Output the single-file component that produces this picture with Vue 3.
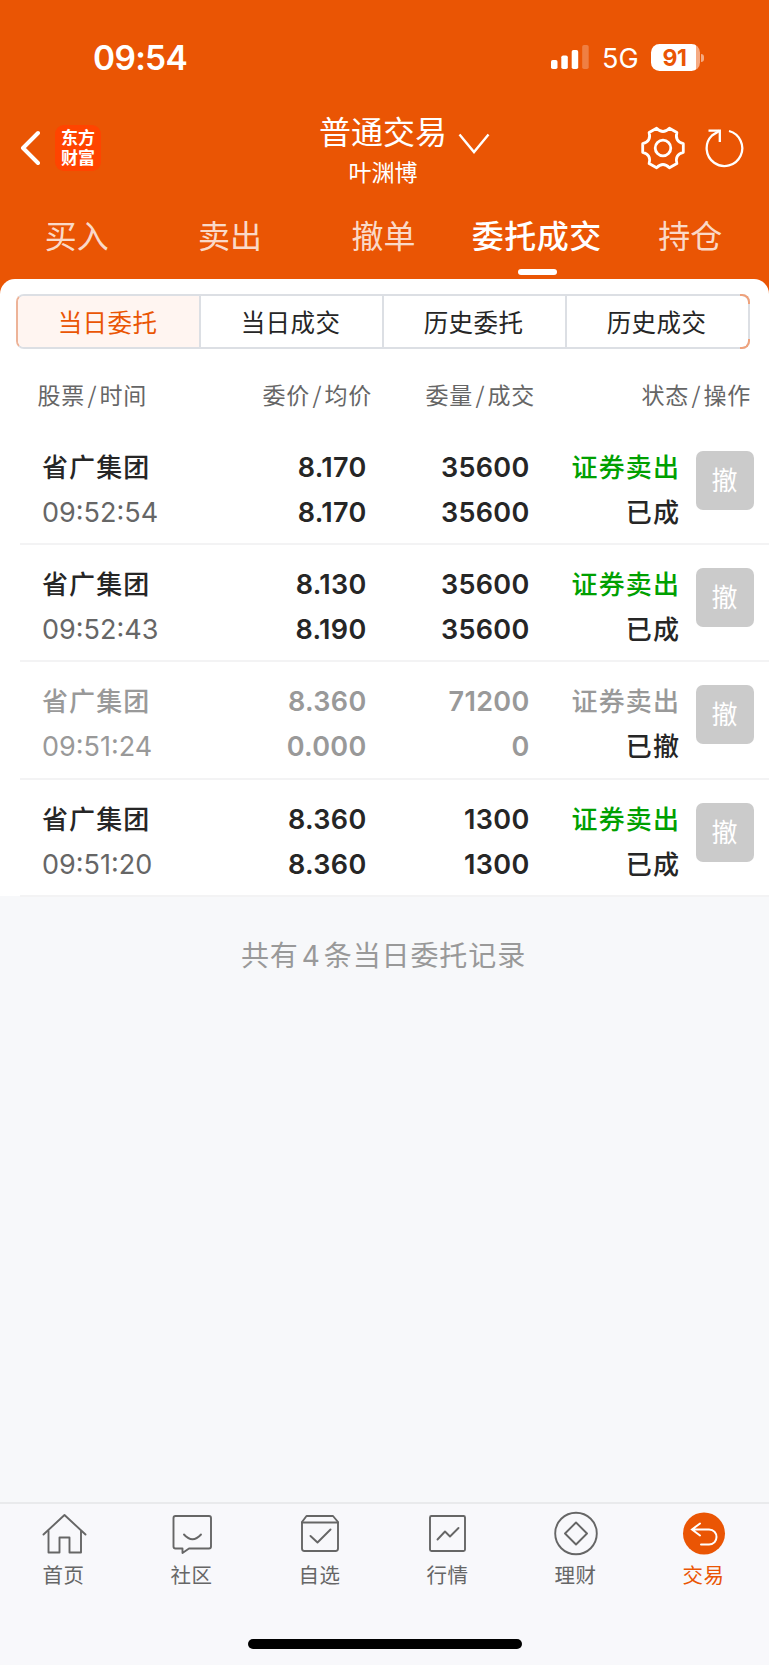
<script setup>
import { ref } from 'vue';

const tabs = ['买入', '卖出', '撤单', '委托成交', '持仓'];
const activeTab = ref(3);

const segments = ['当日委托', '当日成交', '历史委托', '历史成交'];
const activeSegment = ref(0);

const orders = ref([
    { name: '省广集团', time: '09:52:54', price: '8.170', avg: '8.170', amount: '35600', deal: '35600', side: '证券卖出', status: '已成' },
    { name: '省广集团', time: '09:52:43', price: '8.130', avg: '8.190', amount: '35600', deal: '35600', side: '证券卖出', status: '已成' },
    { name: '省广集团', time: '09:51:24', price: '8.360', avg: '0.000', amount: '71200', deal: '0', side: '证券卖出', status: '已撤', cancelled: true },
    { name: '省广集团', time: '09:51:20', price: '8.360', avg: '8.360', amount: '1300', deal: '1300', side: '证券卖出', status: '已成' }
]);

const navs = [
    { label: '首页', icon: 'home' },
    { label: '社区', icon: 'chat' },
    { label: '自选', icon: 'pick' },
    { label: '行情', icon: 'chart' },
    { label: '理财', icon: 'money' },
    { label: '交易', icon: 'trade' }
];
const activeNav = ref(5);
</script>

<template>
    <div class="page">
        <header class="top">
            <div class="status-bar">
                <span class="clock">09:54</span>
                <div class="status-right">
                    <svg class="signal" width="38" height="25" viewBox="0 0 38 25" fill="#fff">
                        <rect x="0" y="15" width="6.5" height="9" rx="1.8" />
                        <rect x="10.3" y="10.5" width="6.5" height="13.5" rx="1.8" />
                        <rect x="20.7" y="5" width="6.5" height="19" rx="1.8" />
                        <rect x="31.2" y="0" width="6.5" height="24" rx="1.8" opacity="0.25" />
                    </svg>
                    <span class="network">5G</span>
                    <div class="battery">
                        <span class="battery-level">91</span>
                    </div>
                    <span class="battery-cap"></span>
                </div>
            </div>
            <div class="title-bar">
                <div class="title-left">
                    <svg width="20" height="36" viewBox="0 0 20 36" fill="none" stroke="#fff" stroke-width="4" stroke-linecap="round" stroke-linejoin="round">
                        <path d="M18 3L3 18L18 33" />
                    </svg>
                    <div class="logo">
                        <span>东方</span>
                        <span>财富</span>
                    </div>
                </div>
                <div class="title-center">
                    <span class="title">普通交易</span>
                    <span class="account">叶渊博</span>
                </div>
                <svg class="arrow-down" width="32" height="22" viewBox="0 0 32 22" fill="none" stroke="#fff" stroke-width="2.4">
                    <path d="M1.5 1.5L16 19L30.5 1.5" />
                </svg>
                <div class="title-right">
                    <svg width="46" height="46" viewBox="-23 -23 46 46" fill="none" stroke="#fff" stroke-width="2.8" stroke-linejoin="round">
                        <path d="M20.3 -4.3V4.3Q11.5 6.6 13.9 15.5L6.4 19.8Q0 13.2 -6.4 19.8L-13.9 15.5Q-11.5 6.6 -20.3 4.3V-4.3Q-11.5 -6.6 -13.9 -15.5L-6.4 -19.8Q0 -13.2 6.4 -19.8L13.9 -15.5Q11.5 -6.6 20.3 -4.3Z" />
                        <circle r="7.8" />
                    </svg>
                    <svg width="40" height="40" viewBox="-20 -20 40 40" fill="none" stroke="#fff" stroke-width="2.3">
                        <path d="M4 -17A17.8 17.8 0 1 1 -13 -12.500L-5.500 -17.300" />
                        <path d="M-16.500 -17.300H-5.200V-6" />
                    </svg>
                </div>
            </div>
            <nav class="tabs">
                <div v-for="(tab, i) in tabs" :key="tab" class="tab" :class="{ active: i === activeTab }" @click="activeTab = i">
                    {{ tab }}
                </div>
            </nav>
        </header>

        <main class="panel">
            <div class="segments">
                <div v-for="(seg, i) in segments" :key="seg" class="segment" :class="{ active: i === activeSegment }" @click="activeSegment = i">
                    {{ seg }}
                </div>
            </div>
            <div class="list-head">
                <span class="col-name">股票<i>/</i>时间</span>
                <span class="col-price">委价<i>/</i>均价</span>
                <span class="col-amount">委量<i>/</i>成交</span>
                <span class="col-status">状态<i>/</i>操作</span>
            </div>
            <div v-for="order in orders" :key="order.time" class="order" :class="{ cancelled: order.cancelled }">
                <div class="cell cell-name">
                    <span class="cn">{{ order.name }}</span>
                    <span class="time">{{ order.time }}</span>
                </div>
                <div class="cell cell-price">
                    <span>{{ order.price }}</span>
                    <span>{{ order.avg }}</span>
                </div>
                <div class="cell cell-amount">
                    <span>{{ order.amount }}</span>
                    <span>{{ order.deal }}</span>
                </div>
                <div class="cell cell-status">
                    <span class="cn side">{{ order.side }}</span>
                    <span class="cn state">{{ order.status }}</span>
                </div>
                <button class="cancel">撤</button>
            </div>
        </main>

        <p class="total">共有<b>{{ orders.length }}</b>条当日委托记录</p>

        <footer class="bottom">
            <div class="nav">
                <div v-for="(item, i) in navs" :key="item.icon" class="nav-item" :class="{ active: i === activeNav }" @click="activeNav = i">
                    <svg width="46" height="46" viewBox="0 0 46 46" fill="none" stroke="#666" stroke-width="1.9" stroke-linecap="round" stroke-linejoin="round">
                        <template v-if="item.icon === 'home'">
                            <path d="M2.5 23.5L23.5 4L44.5 23.5" />
                            <path d="M7.5 20V41.5H18.5V26.5H28.5V41.5H40V20" />
                        </template>
                        <template v-else-if="item.icon === 'chat'">
                            <path d="M6.5 5H40Q42 5 42 7V35.5Q42 37.5 40 37.5H20L13.5 42V37.5H6.5Q4.5 37.5 4.5 35.5V7Q4.5 5 6.5 5Z" />
                            <path d="M15 23.5Q23.5 33 32 23.5" />
                        </template>
                        <template v-else-if="item.icon === 'pick'">
                            <path d="M5 11L9.5 5H36L41 11V37.5Q41 40 38.5 40H7.5Q5 40 5 37.5Z" />
                            <path d="M5 11.5H41M13.5 25L20.5 31.5L33.5 18.5" />
                        </template>
                        <template v-else-if="item.icon === 'chart'">
                            <rect x="5" y="5" width="35" height="35" rx="1.5" />
                            <path d="M12.5 28.5L20 20.5L25 25.5L33.5 17" />
                        </template>
                        <template v-else-if="item.icon === 'money'">
                            <circle cx="23" cy="22.5" r="20.8" />
                            <path d="M23 11.5L34 22.5L23 33.5L12 22.5Z" />
                        </template>
                        <template v-else>
                            <circle cx="23" cy="22.5" r="21" fill="#ea5504" stroke="none" />
                            <path d="M19 12.5L11 18.5L19 24.5M11 18.5H28C38 18.5 38 33.5 28 33.5H20" stroke="#fff" stroke-width="2" stroke-linejoin="miter" />
                        </template>
                    </svg>
                    <span>{{ item.label }}</span>
                </div>
            </div>
            <div class="home-indicator"></div>
        </footer>
    </div>
</template>

<style>
body {
    margin: 0;
    background-color: #f7f8fa;
}
</style>

<style scoped>
.page {
    width: 769px;
    height: 1665px;
    display: flex;
    flex-direction: column;
    overflow: hidden;
    background-color: #f7f8fa;
    color: #262626;
    font-family: 'Inter', 'Noto Sans CJK SC', sans-serif;
}

.top {
    height: 294px;
    margin-bottom: -15px;
    flex-shrink: 0;
    background-color: #ea5504;
    color: #fff;
}

.status-bar {
    height: 114px;
    box-sizing: border-box;
    padding: 1px 65px 0 93px;
    display: flex;
    align-items: center;
    justify-content: space-between;
}

.clock {
    font-size: 33.5px;
    font-weight: 600;
    letter-spacing: -0.7px;
    padding-top: 1px;
}

.status-right {
    display: flex;
    align-items: center;
}

.network {
    margin-left: 13px;
    width: 49px;
    font-size: 27px;
    line-height: 30px;
    padding-top: 3px;
}

.battery {
    width: 49px;
    height: 27px;
    border-radius: 8.5px;
    background: linear-gradient(to right, #fff 45px, #f5aa82 45px);
    color: #ea5504;
    text-align: center;
}

.battery-level {
    display: block;
    padding-right: 2px;
    font-size: 23px;
    font-weight: 700;
    line-height: 28px;
    letter-spacing: -0.5px;
}

.battery-cap {
    width: 3px;
    height: 8px;
    margin-left: 1px;
    border-radius: 0 4px 4px 0;
    background-color: #f5aa82;
}

.title-bar {
    position: relative;
    height: 72px;
    display: flex;
    justify-content: space-between;
}

.title-left {
    display: flex;
    align-items: center;
    height: 68px;
    padding-left: 20px;
}

.logo {
    width: 46px;
    height: 46px;
    box-sizing: border-box;
    padding-bottom: 3px;
    margin-left: 15px;
    border-radius: 9px;
    background-color: #ff4400;
    display: flex;
    flex-direction: column;
    align-items: center;
    justify-content: center;
    font-family: 'Noto Sans CJK SC', sans-serif;
    font-size: 17px;
    font-weight: 700;
    line-height: 20px;
}

.title-center {
    position: absolute;
    left: 0;
    right: 3px;
    top: -2px;
    display: flex;
    flex-direction: column;
    align-items: center;
    font-family: 'Noto Sans CJK SC', sans-serif;
}

.title {
    font-size: 32px;
    line-height: 36px;
}

.account {
    margin-top: 7px;
    font-size: 23px;
    line-height: 32px;
}

.arrow-down {
    position: absolute;
    left: 458px;
    top: 19px;
}

.title-right {
    display: flex;
    align-items: center;
    gap: 19px;
    height: 68px;
    padding-right: 24px;
}

.tabs {
    height: 93px;
    display: flex;
    margin-right: 2px;
    font-family: 'Noto Sans CJK SC', sans-serif;
}

.tab {
    position: relative;
    width: 20%;
    text-align: center;
    white-space: nowrap;
    font-size: 32px;
    line-height: 96px;
    color: rgba(255, 255, 255, 0.8);
}

.tab.active {
    color: #fff;
    font-weight: 500;
    letter-spacing: 0.5px;
}

.tab.active::after {
    content: '';
    position: absolute;
    left: 58px;
    top: 83px;
    width: 39px;
    height: 6px;
    border-radius: 3px;
    background-color: #fff;
}

.panel {
    flex-shrink: 0;
    height: 617px;
    box-sizing: border-box;
    padding-top: 15px;
    border-radius: 15px 15px 0 0;
    background-color: #fff;
    position: relative;
}

.segments {
    position: relative;
    height: 55px;
    box-sizing: border-box;
    margin: 0 19px 0 16px;
    border: 2px solid #dcdfe4;
    border-left-color: #edb398;
    border-radius: 8px;
    display: flex;
}

/* tinted right corners */
.segments::before,
.segments::after {
    content: '';
    position: absolute;
    right: -2px;
    width: 8px;
    height: 8px;
    border-right: 2px solid #efa27c;
}

.segments::before {
    top: -2px;
    border-top: 2px solid #efa27c;
    border-top-right-radius: 8px;
}

.segments::after {
    bottom: -2px;
    border-bottom: 2px solid #efa27c;
    border-bottom-right-radius: 8px;
}

.segment {
    flex: 1;
    border-left: 2px solid #dcdfe4;
    padding-right: 2px;
    text-align: center;
    font-size: 24.5px;
    line-height: 51px;
    letter-spacing: 0.4px;
    font-family: 'Noto Sans CJK SC', sans-serif;
}

.segment:first-child {
    border-left: none;
    border-radius: 6px 0 0 6px;
}

.segment.active {
    background-color: #fff5f1;
    color: #ea5504;
}

.list-head {
    height: 78.7px;
    display: flex;
    padding-right: 18px;
    font-size: 23px;
    line-height: 90px;
    letter-spacing: 0.7px;
    color: #666;
    white-space: nowrap;
    text-align: right;
    font-family: 'Noto Sans CJK SC', sans-serif;
}

.list-head i {
    font-style: normal;
    padding: 0 2.5px;
}

.col-name {
    width: 147px;
}

.col-price {
    width: 225px;
}

.col-amount {
    width: 163px;
}

.col-status {
    flex: 1;
}

.order {
    height: 117.3px;
    box-sizing: border-box;
    margin-left: 20px;
    padding: 17px 15px 0 22px;
    border-bottom: 2px solid #f3f3f4;
    display: flex;
    font-size: 27px;
    font-weight: 600;
}

.cell {
    display: flex;
    flex-direction: column;
    text-align: right;
    line-height: 45px;
    white-space: nowrap;
}

.cell span {
    height: 45px;
}

.cell .cn {
    font-family: 'Noto Sans CJK SC', sans-serif;
    font-size: 26px;
    font-weight: 500;
    line-height: 42px;
    letter-spacing: 1.1px;
}

.cell-name {
    width: 150px;
    text-align: left;
}

.time {
    font-weight: 400;
    color: #666;
}

.cell-price {
    width: 174.5px;
}

.cell-price,
.cell-amount {
    letter-spacing: 0.3px;
}

.cell-amount {
    width: 163px;
}

.cell-status {
    width: 150.5px;
}

.side {
    color: #00a000;
}

.cancel {
    width: 58px;
    height: 59px;
    margin: 6px 0 0 auto;
    padding: 0 1px 3px 0;
    border: none;
    border-radius: 7px;
    background-color: #cbcbcb;
    color: #fff;
    font-size: 26px;
    line-height: 56px;
    font-family: 'Noto Sans CJK SC', sans-serif;
}

.cancelled .cell {
    color: #999;
}

.cancelled .time,
.cancelled .side {
    color: #999;
}

.cancelled .state {
    color: #262626;
}

.total {
    flex: 1;
    margin: 37px 2px 0 0;
    text-align: center;
    font-size: 28px;
    line-height: 42px;
    letter-spacing: 0.9px;
    color: #999;
    font-family: 'Noto Sans CJK SC', sans-serif;
}

.total b {
    font-weight: 400;
    padding: 0 3px;
    font-family: 'Inter', sans-serif;
}

.bottom {
    height: 163px;
    box-sizing: border-box;
    border-top: 2px solid #e9eaec;
    background-color: #f8f8fb;
    display: flex;
    flex-direction: column;
    align-items: center;
}

.nav {
    width: 100%;
    height: 135px;
    display: flex;
}

.nav-item {
    width: 128px;
    padding-top: 7px;
    display: flex;
    flex-direction: column;
    align-items: center;
    color: #666;
}

.nav-item span {
    font-size: 20.5px;
    line-height: 30px;
    margin: 2px 1px 0 0;
    letter-spacing: 0.5px;
    font-family: 'Noto Sans CJK SC', sans-serif;
}

.nav-item.active {
    color: #ea5504;
}

.home-indicator {
    width: 274px;
    height: 10px;
    border-radius: 5px;
    background-color: #000;
}
</style>
